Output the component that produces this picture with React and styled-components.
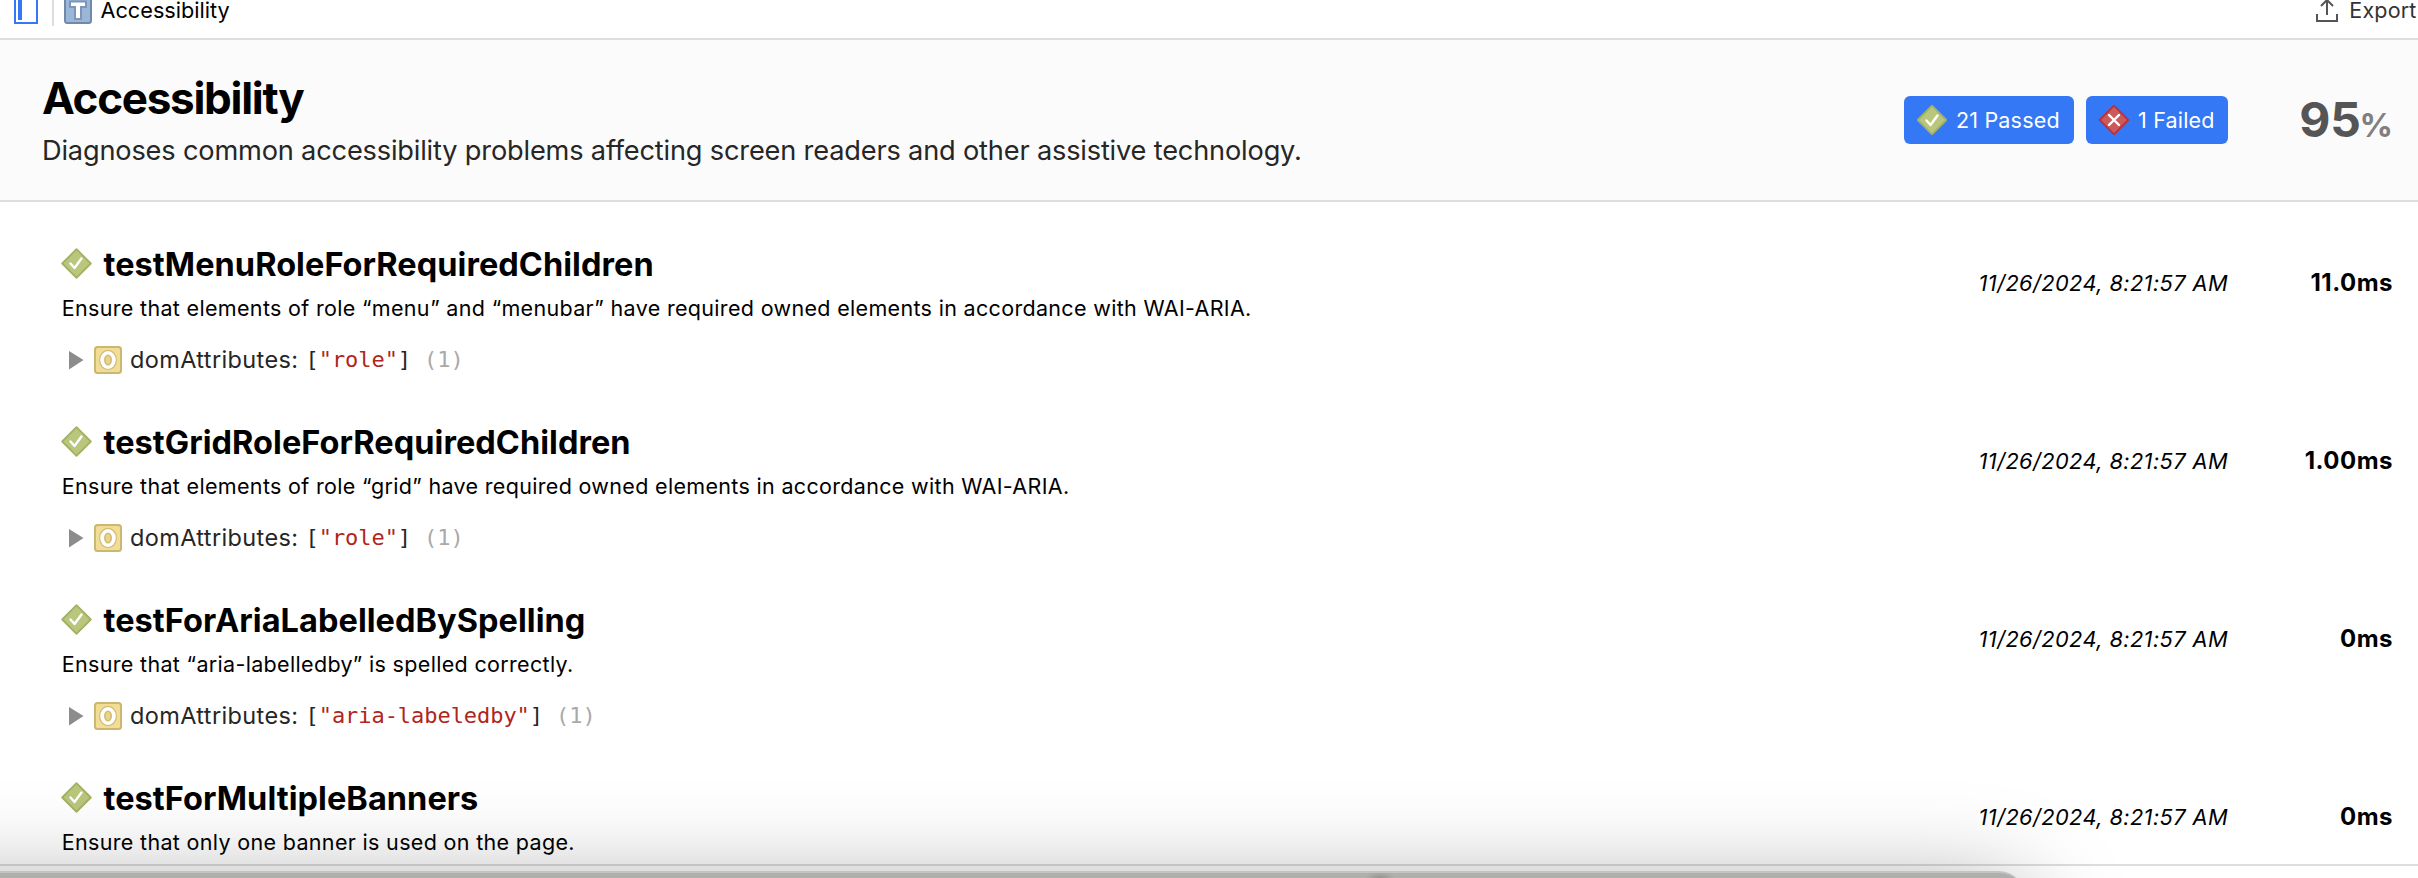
import React from "react";
import styled, { createGlobalStyle } from "styled-components";

const GlobalStyle = createGlobalStyle`
  html, body { margin: 0; padding: 0; background: #fff; }
  body {
    overflow: hidden;
    color: #000;
    font-family: Inter, "Liberation Sans", sans-serif;
    font-size: 21.5px;
  }
`;

const Page = styled.main`
  position: relative;
  display: flex;
  flex-direction: column;
  height: 878px;
  overflow: hidden;
`;

const Toolbar = styled.nav`
  display: flex;
  flex: none;
  align-items: center;
  justify-content: space-between;
  height: 56px;
  margin-top: -18px;
  border-bottom: 2px solid #ddd;
`;

const PathBar = styled.div`
  display: flex;
  align-items: center;
  padding-left: 14px;
`;

const Separator = styled.span`
  width: 2px;
  height: 32px;
  margin: 0 10px 0 14px;
  background: #ddd;
`;

const PathLabel = styled.span`
  margin-left: 8.5px;
  font-size: 21.7px;
  line-height: 28px;
`;

const ExportButton = styled.button`
  display: flex;
  align-items: center;
  gap: 11px;
  padding: 0 1.5px 0 0;
  border: 0;
  background: none;
  color: #333;
  font: inherit;
  line-height: 28px;
  letter-spacing: 0.16px;
`;

const Icon = styled.svg`
  display: block;
  flex: none;
`;

const Header = styled.header`
  display: flex;
  flex: none;
  align-items: center;
  height: 160px;
  padding: 0 25px 0 42px;
  border-bottom: 2px solid #ddd;
  background: #fbfbfb;
`;

const Information = styled.div`
  flex: 1;
`;

const Title = styled.h1`
  margin: 0 0 11px;
  font-size: 44px;
  font-weight: 700;
  line-height: 50px;
  letter-spacing: -1.28px;
`;

const Subtitle = styled.p`
  margin: 0;
  color: #262626;
  font-size: 27.2px;
  line-height: 34px;
  letter-spacing: -0.18px;
`;

const Filters = styled.div`
  display: flex;
  gap: 12px;
`;

const Filter = styled.button`
  display: flex;
  align-items: center;
  gap: 9px;
  width: ${(p) => p.$width}px;
  height: 48px;
  padding: 0 0 0 13px;
  border: 0;
  border-radius: 6px;
  background: #3478f6;
  color: #fff;
  font: inherit;
  letter-spacing: 0.18px;
  white-space: nowrap;
`;

const Score = styled.div`
  width: 165px;
  padding-top: 4px;
  color: #555;
  font-size: 48px;
  font-weight: 700;
  line-height: 58px;
  text-align: right;
`;

const Percent = styled.span`
  margin-left: -1.5px;
  color: #808080;
  font-size: 33px;
`;

const Results = styled.section`
  flex: 1;
  min-height: 0;
  padding: 42px 25px 0 61px;
  overflow: hidden;
`;

const Result = styled.article`
  height: 178px;
`;

const ResultHeader = styled.div`
  display: flex;
  align-items: center;
`;

const Name = styled.h2`
  display: flex;
  align-items: center;
  gap: 10.5px;
  margin: 0 0 7px;
  font-size: 32.5px;
  font-weight: 700;
  line-height: 42px;
  letter-spacing: 0.05px;

  & > svg {
    margin-bottom: 2px;
  }
`;

const Description = styled.p`
  margin: 0;
  padding-left: 0.8px;
  line-height: 30px;
  letter-spacing: 0.325px;
`;

const Timestamp = styled.time`
  padding-bottom: 1px;
  font-size: 21.8px;
  font-style: italic;
  line-height: 30px;
  letter-spacing: 0.4px;
`;

const Duration = styled.span`
  width: 165px;
  padding-bottom: 2px;
  font-size: 24px;
  font-weight: 700;
  line-height: 30px;
  letter-spacing: 0.5px;
  text-align: right;
`;

const Property = styled.div`
  display: flex;
  align-items: center;
  height: 28px;
  margin-top: 23px;
  padding-left: 8px;
  color: #262626;
`;

const PropertyName = styled.span`
  margin-left: 8px;
  padding-bottom: 1px;
  font-size: 23.5px;
  letter-spacing: 0.38px;
`;

const Value = styled.code`
  margin-left: 7px;
  font: 22px/28px "DejaVu Sans Mono", monospace;
  letter-spacing: -0.05px;
  white-space: pre;
`;

const Str = styled.span`
  color: #b0251c;
`;

const Count = styled.span`
  margin-left: 13px;
  color: #a9a9a9;
`;

const PanelEdge = styled.div`
  flex: none;
  height: 12px;
  border-top: 2px solid #ddd;
`;

const FrontWindow = styled.div`
  position: absolute;
  top: 871px;
  left: -120px;
  box-sizing: border-box;
  width: 2145px;
  height: 400px;
  border-top: 2px solid #c4c4c3;
  border-radius: 26px;
  background: radial-gradient(ellipse 15px 6px at 1500px 5px, #949492, #afafad);
  box-shadow: 0 20px 100px rgba(0, 0, 0, 0.38);
`;

function Diamond({ size = 30, fail }) {
  return (
    <Icon width={size} height={size} viewBox={`0 0 ${size} ${size}`}>
      <path
        d="M15.5 1.2 29.8 15.5 15.5 29.8 1.2 15.5Z"
        transform={size === 30 ? "translate(-.5 -.5)" : undefined}
        fill={fail ? "#ca5a5e" : "#b9c77c"}
        stroke={fail ? "#bd3035" : "#a3b065"}
        strokeWidth="1.8"
        strokeLinejoin="round"
      />
      <path
        d={fail ? "M10 10 20 20M20 10 10 20" : "M9.5 15.5 13.5 20 20.5 10.5"}
        fill="none"
        stroke="#fff"
        strokeWidth="2.4"
        strokeLinecap="round"
        strokeLinejoin="round"
      />
    </Icon>
  );
}

function SidebarIcon() {
  return (
    <Icon width="24" height="28" viewBox="0 0 24 28">
      <rect x="1" y="1" width="22" height="26" fill="none" stroke="#3478f6" strokeWidth="2" />
      <rect x="4" y="4" width="4" height="20" fill="#3478f6" />
    </Icon>
  );
}

function TestIcon() {
  return (
    <Icon width="28" height="28" viewBox="0 0 28 28">
      <rect x="1" y="1" width="26" height="26" rx="2.5" fill="#9bb7d8" stroke="#7088a9" strokeWidth="2" />
      <path d="M5 4.5H23V12H18V24H10V12H5Z" fill="#7d95b8" />
      <path d="M7 6.5H21V10H16V22H12V10H7Z" fill="#fff" />
    </Icon>
  );
}

function ExportIcon() {
  return (
    <Icon width="22" height="28" viewBox="0 0 22 28" fill="none" stroke="#555" strokeWidth="2">
      <path d="M1 18V25H21V18M11 19V4.5M5 10 11 4 17 10" />
    </Icon>
  );
}

function ObjectIcon() {
  return (
    <Icon width="28" height="28" viewBox="0 0 28 28">
      <rect x="1" y="1" width="26" height="26" rx="2.5" fill="#f2dd96" stroke="#ccb771" strokeWidth="2" />
      <ellipse cx="14" cy="14" rx="9" ry="10.2" fill="#d3bd75" />
      <ellipse cx="14" cy="14" rx="7.8" ry="9" fill="#fff" />
      <ellipse cx="14" cy="14" rx="4" ry="5.6" fill="#d3bd75" />
      <ellipse cx="14" cy="14" rx="2.3" ry="4" fill="#e9d48c" />
    </Icon>
  );
}

function Disclosure() {
  return (
    <Icon width="25" height="28" viewBox="0 0 25 28">
      <path d="M0 5 14.5 14 0 23.5Z" fill="#8c8c8c" />
    </Icon>
  );
}

const results = [
  {
    name: "testMenuRoleForRequiredChildren",
    text: "Ensure that elements of role “menu” and “menubar” have required owned elements in accordance with WAI-ARIA.",
    attribute: "role",
    duration: "11.0ms",
  },
  {
    name: "testGridRoleForRequiredChildren",
    text: "Ensure that elements of role “grid” have required owned elements in accordance with WAI-ARIA.",
    attribute: "role",
    duration: "1.00ms",
  },
  {
    name: "testForAriaLabelledBySpelling",
    text: "Ensure that “aria-labelledby” is spelled correctly.",
    attribute: "aria-labeledby",
    duration: "0ms",
  },
  {
    name: "testForMultipleBanners",
    text: "Ensure that only one banner is used on the page.",
    duration: "0ms",
  },
];

export default function App() {
  return (
    <Page>
      <GlobalStyle />
      <Toolbar>
        <PathBar>
          <SidebarIcon />
          <Separator />
          <TestIcon />
          <PathLabel>Accessibility</PathLabel>
        </PathBar>
        <ExportButton>
          <ExportIcon />
          Export
        </ExportButton>
      </Toolbar>
      <Header>
        <Information>
          <Title>Accessibility</Title>
          <Subtitle>
            Diagnoses common accessibility problems affecting screen readers and other assistive technology.
          </Subtitle>
        </Information>
        <Filters>
          <Filter $width={170}>
            <Diamond />
            21 Passed
          </Filter>
          <Filter $width={142}>
            <Diamond fail />
            1 Failed
          </Filter>
        </Filters>
        <Score>
          95<Percent>%</Percent>
        </Score>
      </Header>
      <Results>
        {results.map((r) => (
          <Result key={r.name}>
            <ResultHeader>
              <Information>
                <Name>
                  <Diamond size={32} />
                  {r.name}
                </Name>
                <Description>{r.text}</Description>
              </Information>
              <Timestamp>11/26/2024, 8:21:57 AM</Timestamp>
              <Duration>{r.duration}</Duration>
            </ResultHeader>
            {r.attribute && (
              <Property>
                <Disclosure />
                <ObjectIcon />
                <PropertyName>domAttributes:</PropertyName>
                <Value>
                  [<Str>"{r.attribute}"</Str>]<Count>(1)</Count>
                </Value>
              </Property>
            )}
          </Result>
        ))}
      </Results>
      <PanelEdge />
      <FrontWindow />
    </Page>
  );
}
